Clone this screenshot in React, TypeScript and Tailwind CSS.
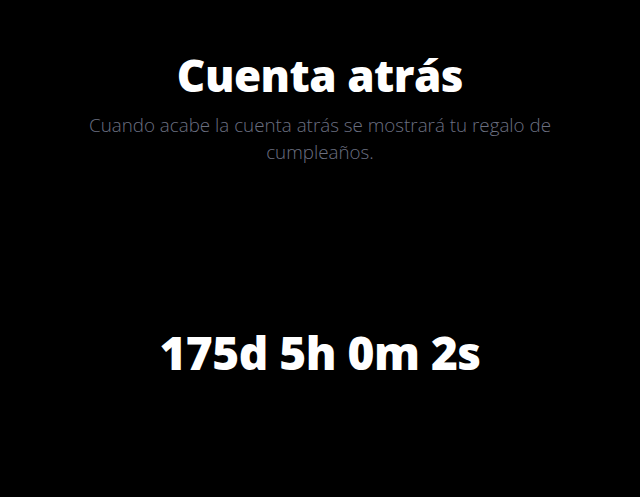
export default function App() {
  return (
    <div
      className="min-h-screen w-full bg-black text-white flex flex-col items-center"
      style={{ fontFamily: '"Open Sans", "Noto Sans", sans-serif' }}
    >
      <header className="flex flex-col items-center pt-[47px] px-4">
        <h1 className="text-[44px] leading-[56px] font-extrabold tracking-[-0.5px]">
          Cuenta atrás
        </h1>
        <p className="mt-[9px] max-w-[480px] text-center text-[18.8px] leading-[27px] font-light text-[#6b6f80]">
          Cuando acabe la cuenta atrás se mostrará tu regalo de cumpleaños.
        </p>
      </header>
      <div className="mt-[156px] text-[46px] leading-[60px] font-extrabold tracking-[-0.5px]">
        175d 5h 0m 2s
      </div>
    </div>
  );
}
